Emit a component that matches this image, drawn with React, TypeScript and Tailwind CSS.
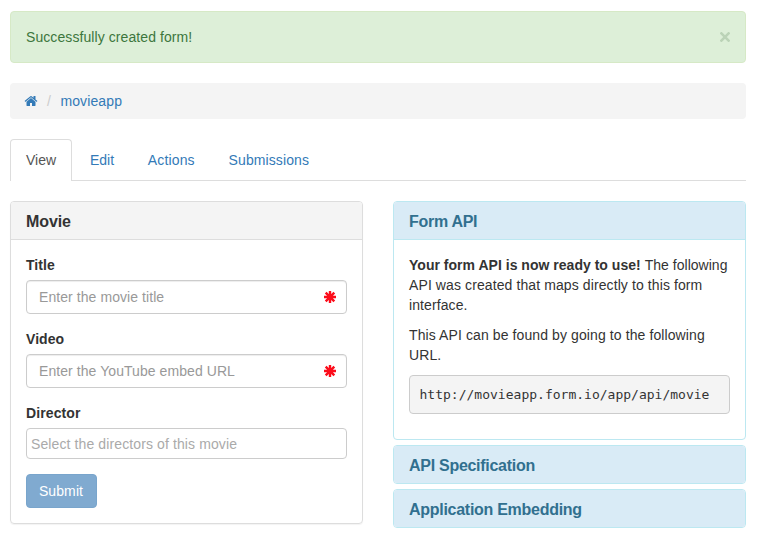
import React from "react";

function Required() {
  return (
    <svg className="h-3 w-3 shrink-0" viewBox="-6 -6 12 12" stroke="#fc0d1b" strokeWidth="2.4">
      <path d="M0 -6V6M-6 0H6M-4.3 -4.3L4.3 4.3M-4.3 4.3L4.3 -4.3" />
    </svg>
  );
}

function HomeIcon() {
  return (
    <svg className="-ml-px h-[14px] w-[14px] shrink-0" viewBox="0 0 1792 1792" fill="currentColor">
      <path d="M1472 992v480q0 26-19 45t-45 19h-384v-384h-256v384h-384q-26 0-45-19t-19-45v-480q0-1 .5-3t.5-3l575-474 575 474q1 2 1 6zm223-69l-62 74q-8 9-21 11h-3q-13 0-21-7l-692-577-692 577q-12 8-24 7-13-2-21-11l-62-74q-8-10-7-23.5t11-21.5l719-599q32-26 76-26t76 26l244 204v-195q0-14 9-23t23-9h192q14 0 23 9t9 23v408l219 182q10 8 11 21.5t-7 23.5z" />
    </svg>
  );
}

function Field({ label, placeholder }: { label: string; placeholder: string }) {
  return (
    <div className="mb-[15px]">
      <div className="mb-[5px] font-bold tracking-[0.05px]">{label}</div>
      <div className="flex h-[34px] items-center justify-between rounded border border-[#ccc] pr-[10px] pl-3 text-[#999] shadow-[inset_0_1px_1px_rgba(0,0,0,0.075)]">
        <span className="tracking-[0.07px]">{placeholder}</span>
        <Required />
      </div>
    </div>
  );
}

function BlueHeading({ children }: { children: React.ReactNode }) {
  return <h4 className="h-[37px] bg-[#d9ebf6] px-[15px] pt-[11px] text-[16px] leading-[18px] font-bold tracking-[-0.28px] text-[#31708f]">{children}</h4>;
}

export default function App() {
  return (
    <div className="h-[539px] overflow-hidden bg-white pt-[11px] pr-[11px] pl-[10px] font-['Liberation_Sans',Arial,sans-serif] text-[14px] leading-5 text-[#333]">
      <div className="flex h-[52px] items-center justify-between rounded border border-[#d6e9c6] bg-[#ddefd8] px-[15px] text-[#3c763d]">
        <span className="tracking-[0.08px]">Successfully created form!</span>
        <svg className="h-[10px] w-[10px] text-[#bbd3b7]" viewBox="0 0 10 10" stroke="currentColor" strokeWidth="2.6" role="img" aria-label="Close">
          <path d="M.5 .5L9.5 9.5M9.5 .5L.5 9.5" />
        </svg>
      </div>
      <div className="mt-5 flex h-9 items-center rounded bg-[#f4f4f4] px-[15px] text-[#337ab7]">
        <HomeIcon />
        <span className="pr-[9px] pl-[9px] text-[#ccc]">/</span>
        <span className="ml-[0.5px] tracking-[0.12px]">movieapp</span>
      </div>
      <div className="mt-5 flex h-[42px] border-b border-[#ddd] text-[#337ab7]">
        <div className="h-[42px] w-[62px] rounded-t border border-b-0 border-[#ddd] bg-white px-[15px] pt-[10px] text-[#555]">View</div>
        <div className="ml-[18px] pt-[11px]">Edit</div>
        <div className="ml-[33.7px] pt-[11px] tracking-[0.15px]">Actions</div>
        <div className="ml-[33.8px] pt-[11px] tracking-[0.1px]">Submissions</div>
      </div>
      <div className="mt-5 flex items-start gap-[30px]">
        <div className="h-[323px] w-[353px] rounded border border-[#ddd] shadow-[0_1px_1px_rgba(0,0,0,0.05)]">
          <h3 className="h-[38px] rounded-t-[3px] border-b border-[#ddd] bg-[#f4f4f4] px-[15px] pt-[11px] text-[16px] leading-[18px] font-bold tracking-[-0.1px]">Movie</h3>
          <div className="px-[15px] pt-[15px]">
            <Field label="Title" placeholder="Enter the movie title" />
            <Field label="Video" placeholder="Enter the YouTube embed URL" />
            <div className="mb-[5px] font-bold tracking-[0.1px]">Director</div>
            <div className="flex h-[31px] items-center rounded border border-[#ccc] pl-1 tracking-[0.11px] text-[#aaa]">Select the directors of this movie</div>
            <button className="mt-[15px] block h-[34px] w-[71px] rounded border border-[#79a5cc] bg-[#80aad0] pr-[1px] text-white">
              <span className="tracking-[0.1px]">Submit</span>
            </button>
          </div>
        </div>
        <div className="min-w-0 flex-1">
          <div className="h-[239px] overflow-hidden rounded border border-[#bce8f1]">
            <BlueHeading>Form API</BlueHeading>
            <div className="h-[200px] border-t border-[#bce8f1] px-[15px] pt-[15px] tracking-[0.1px]">
              <p><b className="tracking-[0.02px]">Your form API is now ready to use!</b> <span className="tracking-[0.02px]">The following</span><br />API was created that maps directly to this form<br />interface.</p>
              <p className="mt-[10px]">This API can be found by going to the following<br />URL.</p>
              <pre className="mt-[10px] h-[39px] rounded border border-[#ccc] bg-[#f4f4f4] px-[9.5px] pt-[10px] font-['DejaVu_Sans_Mono',monospace] text-[13px] leading-[18px] tracking-[0.01px]">http://movieapp.form.io/app/api/movie</pre>
            </div>
          </div>
          <div className="mt-[5px] overflow-hidden rounded border border-[#bce8f1]"><BlueHeading>API Specification</BlueHeading></div>
          <div className="mt-[5px] overflow-hidden rounded border border-[#bce8f1]"><BlueHeading>Application Embedding</BlueHeading></div>
        </div>
      </div>
    </div>
  );
}
